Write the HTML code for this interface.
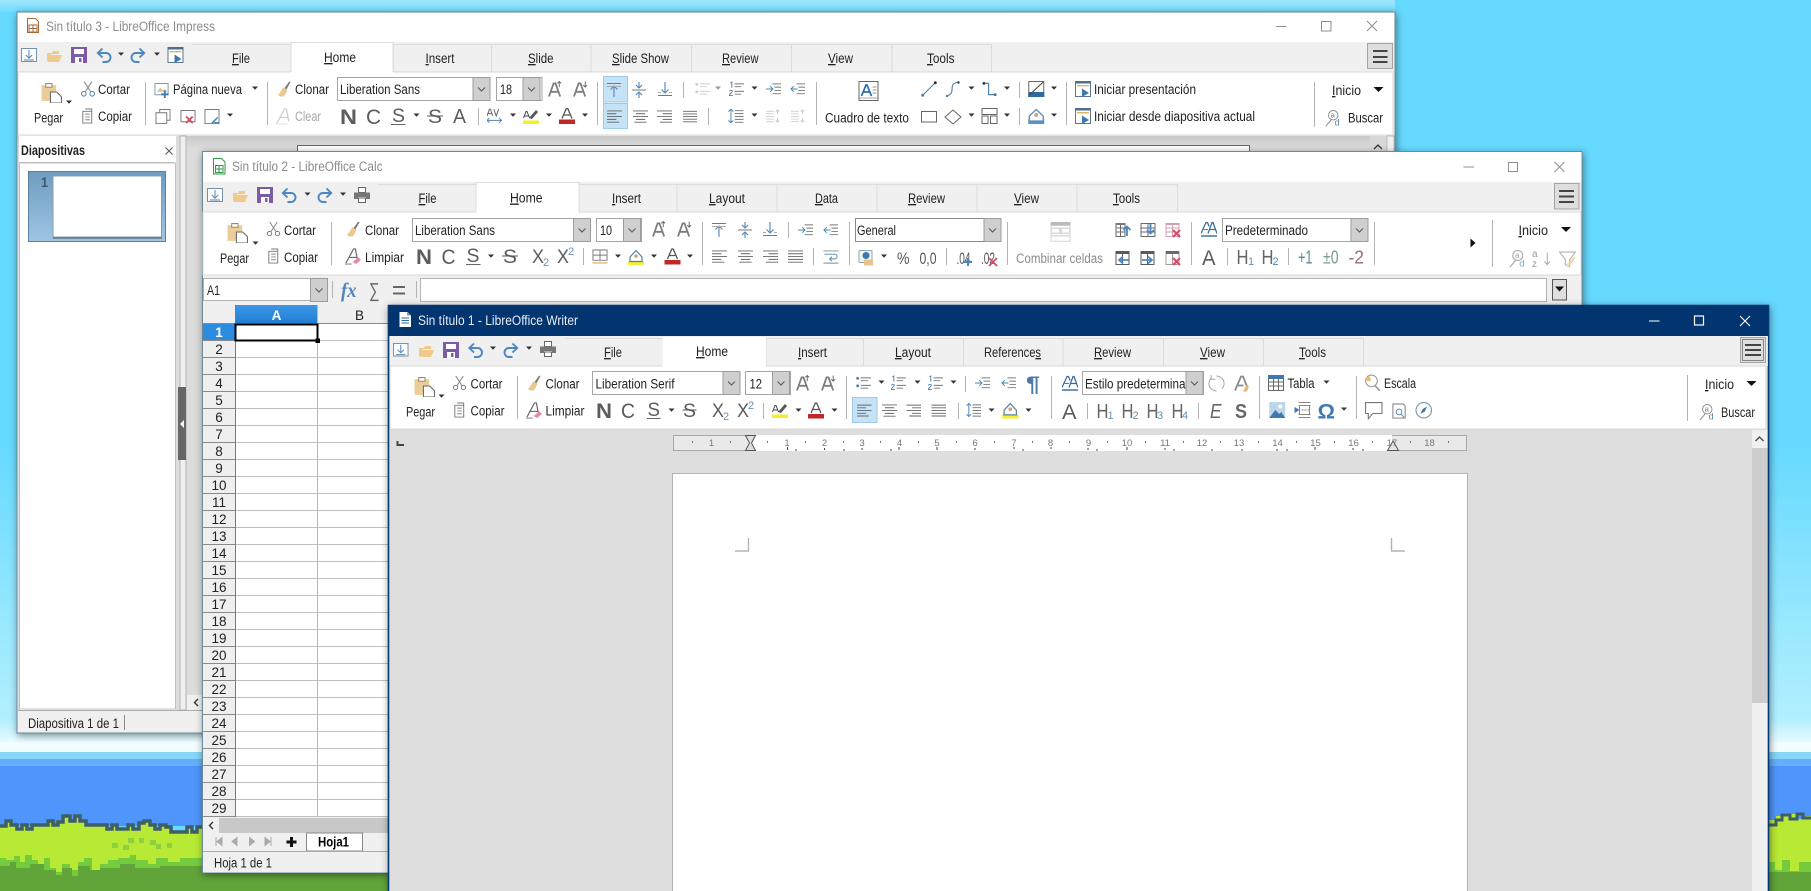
<!DOCTYPE html>
<html lang="es"><head><meta charset="utf-8"><title>LibreOffice</title>
<style>
html,body{margin:0;padding:0;width:1811px;height:891px;overflow:hidden;background:#66d9ff}
svg{display:block;position:absolute;left:0;top:0}
text{font-family:"Liberation Sans",sans-serif;font-size:13.5px;fill:#222}
.t{fill:#8c8c8c}.g{fill:#a8a8a8}.b{font-weight:bold}
.big{font-size:21px;fill:#5c5c5c}
.bold{font-weight:bold}
.h{font-size:21px;fill:#666}.s{font-size:11px;fill:#6b8fb0}
.u{text-decoration:underline}
.r{font-size:9.5px;fill:#777;text-anchor:middle}
.n{text-anchor:middle}
.sep{stroke:#b4b4b4;stroke-width:1;fill:none}
</style></head><body>
<svg width="1811" height="891" viewBox="0 0 1811 891" xmlns="http://www.w3.org/2000/svg">
<defs>
<linearGradient id="sky" x1="0" y1="0" x2="0" y2="1"><stop offset="0" stop-color="#66d9ff"/><stop offset=".6" stop-color="#66d9ff"/><stop offset=".85" stop-color="#9ae9ff"/><stop offset=".97" stop-color="#b2efff"/><stop offset="1" stop-color="#e8fbff"/></linearGradient>
<linearGradient id="top" x1="0" y1="0" x2="0" y2="1"><stop offset="0" stop-color="#9fe6fb"/><stop offset="1" stop-color="#72dcfe"/></linearGradient>
<linearGradient id="thumb" x1="0" y1="0" x2="0" y2="1"><stop offset="0" stop-color="#6e9cc0"/><stop offset="1" stop-color="#9ec5e4"/></linearGradient>
<linearGradient id="colA" x1="0" y1="0" x2="0" y2="1"><stop offset="0" stop-color="#3e97e6"/><stop offset="1" stop-color="#1f7ed2"/></linearGradient>
<linearGradient id="grayd" x1="0" y1="0" x2="0" y2="1"><stop offset="0" stop-color="#c8c8c8"/><stop offset="1" stop-color="#dcdcdc"/></linearGradient>
<filter id="sh" x="-5%" y="-5%" width="110%" height="110%"><feDropShadow dx="1" dy="2" stdDeviation="4" flood-color="#000" flood-opacity=".45"/></filter>
<path id="t" d="M-3-1.5h6l-3 3.2z" fill="#333"/>
<path id="T" d="M-5-2.5h10l-5 5z" fill="#111"/>
<g id="cb"><rect width="17" height="23" fill="#cfcfcf" stroke="#9c9c9c"/><path d="M5 10l3.5 3.5L12 10" fill="none" stroke="#555"/></g>
<symbol id="qnew" viewBox="0 0 16 16"><rect x=".5" y="1.5" width="15" height="13" fill="#fff" stroke="#7690a8"/><path d="M8 3v8M4.800 8L8 11.200 11.200 8M3 13h10" fill="none" stroke="#5585b0"/></symbol>
<symbol id="qopen" viewBox="0 0 16 16"><path d="M1 5h5l1-2h6v3H5L2 13H1zM4.500 7H16l-3 7H1.500z" fill="#efc98d"/></symbol>
<symbol id="qsave" viewBox="0 0 16 16"><path d="M0 0h16v16H0z" fill="#7c5aa8"/><path d="M3 2h10v5H3zM4 10h8v6H4z" fill="#fff"/><path d="M8 11h2.500v4H8z" fill="#7c5aa8"/></symbol>
<symbol id="qundo" viewBox="0 0 16 16"><path d="M6.500 1.500L1.800 6l4.700 4.500M2 6h8a4.500 4.500 0 0 1 0 9H6.500" fill="none" stroke="#4d87bd" stroke-width="1.900"/></symbol>
<symbol id="qredo" viewBox="0 0 16 16"><path d="M9.500 1.500L14.200 6l-4.700 4.500M14 6H6a4.500 4.500 0 0 0 0 9h3.500" fill="none" stroke="#4d87bd" stroke-width="1.900"/></symbol>
<symbol id="qprint" viewBox="0 0 16 16"><path d="M4.500.5h7v5h-7zM4.500 11h7v4.500h-7z" fill="#fff" stroke="#666"/><path d="M0 5.500h16V12h-4v-2H4v2H0z" fill="#777"/></symbol>
<symbol id="pres" viewBox="0 0 16 16"><rect x=".5" y=".5" width="15" height="15" fill="#fff" stroke="#5a7690"/><path d="M0 0h16v2.500H0z" fill="#4f6f8c"/><path d="M2 4h12v1.400H2z" fill="#e1b464"/><path d="M7 7.500L14 12 7 16z" fill="#3f78ad"/></symbol>
<symbol id="paste" viewBox="0 0 20 20"><path d="M0 3h14v15H0z" fill="#eccd98"/><path d="M4 1.500h6V5H4z" fill="#fff" stroke="#a08a64"/><path d="M8.500 9.500h6l4.500 4.500v6H8.500z" fill="#fff" stroke="#666"/></symbol>
<symbol id="sciss" viewBox="0 0 16 16"><path d="M4 .5l6.500 10M12 .5L5.500 10.500" fill="none" stroke="#888" stroke-width="1.100"/><circle cx="3.800" cy="12.800" r="2.300" fill="none" stroke="#4d7fad"/><circle cx="12.200" cy="12.800" r="2.300" fill="none" stroke="#4d7fad"/></symbol>
<symbol id="copy" viewBox="0 0 16 16"><path d="M5.500.5h7v2.500M3 3h9.500v12.500H3z" fill="#fff" stroke="#777"/><path d="M5.500 6h5M5.500 9h5M5.500 12h5" stroke="#888"/></symbol>
<symbol id="clone" viewBox="0 0 16 16"><path d="M8 7l5-7 1.300.8L10 8.500z" fill="#7a7a7a"/><path d="M1 14c2-1 3-4 6-8l4 3c-1 3-3 6-4 7H3z" fill="#eac88f"/></symbol>
<symbol id="clear" viewBox="0 0 18 18"><path d="M1 16L9 1h2l2.500 13M4.500 10h8" fill="none" stroke="#6a6a6a" stroke-width="1.300"/><path d="M8 15l6-5 3 2.500-5 4.500z" fill="#e88aa4"/><path d="M0 17h7" stroke="#777"/></symbol>
<symbol id="clearg" viewBox="0 0 18 18"><path d="M1 16L9 1h2l2.500 13M4.500 10h8" fill="none" stroke="#ccc" stroke-width="1.300"/><path d="M0 17h12" stroke="#ddd"/></symbol>
<symbol id="grow" viewBox="0 0 16 18"><path d="M1 17L6 3h2l5 14M3.500 12h7" fill="none" stroke="#7c7c7c" stroke-width="1.900"/><path d="M12 7V1M10 3l2-2 2 2" fill="none" stroke="#666"/></symbol>
<symbol id="shrink" viewBox="0 0 16 18"><path d="M1 17L6 3h2l5 14M3.500 12h7" fill="none" stroke="#7c7c7c" stroke-width="1.900"/><path d="M13 1v6M11 5l2 2 2-2" fill="none" stroke="#666"/></symbol>
<symbol id="vt" viewBox="0 0 16 16"><path d="M1 1.500h14" stroke="#777"/><path d="M8 15V4M4.500 7.500L8 4l3.500 3.500" fill="none" stroke="#4f86b8" stroke-width="1.100"/><path d="M1 4.500h14" stroke="#aaa"/></symbol>
<symbol id="vc" viewBox="0 0 16 16"><path d="M1 8h14" stroke="#777"/><path d="M8 0v5.500M5 3l3 3 3-3M8 16v-5.500M5 13l3-3 3 3" fill="none" stroke="#4f86b8" stroke-width="1.100"/></symbol>
<symbol id="vb" viewBox="0 0 16 16"><path d="M1 14.500h14" stroke="#777"/><path d="M8 1v11M4.500 8.500L8 12l3.500-3.500" fill="none" stroke="#4f86b8" stroke-width="1.100"/><path d="M1 11.500h3M12 11.500h3" stroke="#aaa"/></symbol>
<symbol id="al" viewBox="0 0 16 16"><path d="M0 1.500h16M0 4.500h10M0 7.500h16M0 10.500h10M0 13.500h13" stroke="#666"/></symbol>
<symbol id="ac" viewBox="0 0 16 16"><path d="M0 1.500h16M3 4.500h10M0 7.500h16M3 10.500h10M1.500 13.500h13" stroke="#666"/></symbol>
<symbol id="ar" viewBox="0 0 16 16"><path d="M0 1.500h16M6 4.500h10M0 7.500h16M6 10.500h10M3 13.500h13" stroke="#666"/></symbol>
<symbol id="aj" viewBox="0 0 16 16"><path d="M0 1.500h16M0 4.500h16M0 7.500h16M0 10.500h16M0 13.500h16" stroke="#666"/></symbol>
<symbol id="ind" viewBox="0 0 16 16"><path d="M7 2.500h9M9 6h7M9 9.500h7M7 13h9" stroke="#777"/><path d="M0 8h7M4.500 5L7.500 8 4.500 11" fill="none" stroke="#3f8ab0"/></symbol>
<symbol id="out" viewBox="0 0 16 16"><path d="M7 2.500h9M9 6h7M9 9.500h7M7 13h9" stroke="#777"/><path d="M8 8H1M4 5L1 8l3 3" fill="none" stroke="#3f8ab0"/></symbol>
<symbol id="bul" viewBox="0 0 16 16"><path d="M5 2.500h11M5 5.500h8M5 10.500h11M5 13.500h8" stroke="#777"/><circle cx="1.800" cy="3" r="1.500" fill="#4f7fa8"/><circle cx="1.800" cy="11" r="1.500" fill="#4f7fa8"/></symbol>
<symbol id="num" viewBox="0 0 16 16"><path d="M6 2.500h10M6 5.500h7M6 10.500h10M6 13.500h7" stroke="#777"/><path d="M1.500 1.500L3 .5v6M.5 10.500c.5-1.500 3-1.500 3 0 0 1.500-3 2-3 4.500h3.500" fill="none" stroke="#4f7fa8"/></symbol>
<symbol id="lsp" viewBox="0 0 16 16"><path d="M7 2.500h9M7 5.500h9M7 8.500h9M7 11.500h9M7 14.500h9" stroke="#777"/><path d="M3 1v14M.5 3.500L3 1l2.500 2.500M.5 12.500L3 15l2.500-2.500" fill="none" stroke="#4f86b8"/></symbol>
<symbol id="ls2" viewBox="0 0 16 16"><path d="M0 2.500h9M0 5.500h9M0 8.500h9M0 11.500h9M0 14.500h9" stroke="#ccc"/><path d="M13 1v5M11 3l2-2 2 2M13 15v-5M11 13l2 2 2-2" fill="none" stroke="#c4c4c4"/></symbol>
<symbol id="hl" viewBox="0 0 16 16"><path d="M0 12.500h16V16H0z" fill="#f5ee2b"/><path d="M6 10l7-8 2 2-6 7z" fill="#555"/><path d="M.5 10L3 3.500h1L6.500 10M1.500 8h4" fill="none" stroke="#444"/></symbol>
<symbol id="fc" viewBox="0 0 16 16"><path d="M0 11.500h16V16H0z" fill="#c02828"/><path d="M3 10.500L7.300.5h1.400L13 10.500M5 7h6" fill="none" stroke="#555" stroke-width="1.300"/></symbol>
<symbol id="bgc" viewBox="0 0 16 16"><path d="M0 12h16v4H0z" fill="#f4ee35"/><path d="M2 8l6-6.500 6 6.500v4.500H2z" fill="#fff" stroke="#5a7f9f" stroke-width="1.200"/><circle cx="8" cy="7" r="1.800" fill="#c8a878"/></symbol>
<symbol id="bord" viewBox="0 0 16 16"><path d="M.5.500h15v11H.5zM8 .5v11M.5 6h15" fill="none" stroke="#7a7a7a"/><path d="M0 13.500h16V15H0z" fill="#e2b574"/></symbol>
<symbol id="avs" viewBox="0 0 16 16"><path d="M0 8L2.500 1h1L6 8M1 5.500h4M7 1l2.500 7L12 1" fill="none" stroke="#666"/><path d="M0 12.500h15M2.500 10L0 12.500 2.500 15M12.500 10l2.500 2.500-2.500 2.500" fill="none" stroke="#4f86b8"/></symbol>
<symbol id="tb" viewBox="0 0 20 20"><rect x=".5" y=".5" width="19" height="19" fill="#fff" stroke="#666"/><path d="M1 17h18" stroke="#aaa"/><path d="M3 15L7.500 4h1L13 15M5 11h6" fill="none" stroke="#2c6ea8" stroke-width="1.700"/><path d="M14 6h4M14 9h4M14 12h4" stroke="#999"/></symbol>
<symbol id="line" viewBox="0 0 16 16"><path d="M1.500 14.500l13-13" stroke="#5082ae" stroke-width="1.100"/><circle cx="1.700" cy="14.300" r="1.500" fill="#4f7fa8"/><circle cx="14.300" cy="1.700" r="1.500" fill="#333"/></symbol>
<symbol id="curve" viewBox="0 0 16 16"><path d="M2 15C12 12 2 2 13 1.500" fill="none" stroke="#5082ae" stroke-width="1.100"/><circle cx="2" cy="15" r="1.200" fill="#4f7fa8"/><circle cx="13.500" cy="1.500" r="1.200" fill="#333"/></symbol>
<symbol id="conn" viewBox="0 0 16 16"><path d="M2 2h5v12h7" fill="none" stroke="#5082ae" stroke-width="1.300"/><circle cx="2" cy="2" r="1.500" fill="#333"/><circle cx="14" cy="14" r="1.500" fill="#3b6f9e"/></symbol>
<symbol id="fill1" viewBox="0 0 16 16"><rect x=".5" y=".5" width="15" height="15" fill="#fff" stroke="#666"/><path d="M0 11h16v5H0z" fill="#2d6aa0"/><path d="M1 14L15 1" stroke="#444"/></symbol>
<symbol id="fill2" viewBox="0 0 16 16"><path d="M0 11h16v5H0z" fill="#5b93c6"/><path d="M1 8l7-6.500 7 6.500v5H1z" fill="#fff" stroke="#5a8cb8" stroke-width="1.300"/><circle cx="8" cy="7" r="2" fill="#c8a878"/></symbol>
<symbol id="lay" viewBox="0 0 16 16"><path d="M.5.500h15v6H.5zM.5 8h6v7.500h-6zM9 8h6.500v7.500H9z" fill="#fff" stroke="#666"/></symbol>
<symbol id="pg" viewBox="0 0 16 16"><path d="M4.500.5H15.500V12H4.500z" fill="#fff" stroke="#777"/><path d="M.5 4H12V15.500H.5z" fill="#fff" stroke="#777"/></symbol>
<symbol id="pgdel" viewBox="0 0 16 16"><path d="M.5.500h15v12H.5z" fill="#fff" stroke="#777"/><path d="M6 7l7 7M13 7l-7 7" stroke="#d0506c" stroke-width="2"/></symbol>
<symbol id="pgfmt" viewBox="0 0 16 16"><path d="M.5.500h15v15H.5z" fill="#fff" stroke="#777"/><path d="M8 15l6-6" stroke="#3c78ad" stroke-width="1.500"/><path d="M10 15h6v-1h-6z" fill="#3c78ad"/></symbol>
<symbol id="newp" viewBox="0 0 16 16"><path d="M.5.500h14v12H.5z" fill="#fff" stroke="#7d98b0"/><path d="M2 10L6 5l3 3 2-1.500 3 3H2z" fill="#e5c487"/><path d="M11 8v8M7 12h8" stroke="#3e7cb0" stroke-width="2"/></symbol>
<symbol id="srch" viewBox="0 0 16 18"><circle cx="8.800" cy="5.500" r="5" fill="none" stroke="#8a8a8a"/><path d="M7 10L1 17" stroke="#8a8a8a"/><text x="6" y="8.200" style="font-size:8px;fill:#7a7a7a">a</text><text x="10.200" y="16.500" style="font-size:9.500px;fill:#4f86b8">d</text></symbol>
<symbol id="mi" viewBox="0 0 16 16"><path d="M.5.500h15v15H.5z" fill="#fff" stroke="#ddd"/><path d="M0 0h16v3H0z" fill="#bbb"/><path d="M.5 5h7v4h-7zM8.500 5h7v4h-7zM.5 11h15" fill="none" stroke="#d4d4d4"/></symbol>
<symbol id="cu" viewBox="0 0 16 16"><path d="M1 1.500h9v13H1zM1 6h9M1 10h9M5.500 1.500v13" fill="none" stroke="#6a6a6a"/><path d="M1 1h9v2H1z" fill="#7a7a7a"/><path d="M12 14V5M8.500 8l3.500-3.500L15.500 8" fill="none" stroke="#4c86bd" stroke-width="1.800"/></symbol>
<symbol id="cd" viewBox="0 0 16 16"><path d="M1 1.500h14v13H1zM1 6h14M1 10h14M8 1.500v13" fill="none" stroke="#6a6a6a"/><path d="M10.500 2v9M7 8l3.500 3.500L14 8" fill="none" stroke="#4c86bd" stroke-width="1.800"/></symbol>
<symbol id="cx" viewBox="0 0 16 16"><path d="M1 1.500h13v13H1zM1 6h13M1 10h13M7.500 1.500v13" fill="none" stroke="#d49fae"/><path d="M1 1h13v2H1z" fill="#d49fae"/><path d="M8 8l7 7M15 8l-7 7" stroke="#d0506c" stroke-width="2"/></symbol>
<symbol id="cl" viewBox="0 0 16 16"><path d="M1 1.500h13v13H1zM7.500 1.500v13" fill="none" stroke="#5a5a5a"/><path d="M1 1h13v3H1z" fill="#5a5a5a"/><path d="M14 10H4M8 6.500L4 10l4 3.500" fill="none" stroke="#4c86bd" stroke-width="1.800"/></symbol>
<symbol id="cr" viewBox="0 0 16 16"><path d="M1 1.500h13v13H1zM7.500 1.500v13" fill="none" stroke="#5a5a5a"/><path d="M1 1h13v3H1z" fill="#5a5a5a"/><path d="M2 10h10M8 6.500l4 3.500-4 3.500" fill="none" stroke="#4c86bd" stroke-width="1.800"/></symbol>
<symbol id="cxd" viewBox="0 0 16 16"><path d="M1 1.500h13v13H1zM7.500 1.500v13" fill="none" stroke="#a99"/><path d="M1 1h13v3H1z" fill="#6a6a6a"/><path d="M8 8l7 7M15 8l-7 7" stroke="#d0506c" stroke-width="2"/></symbol>
<symbol id="wrap" viewBox="0 0 16 16"><path d="M0 1.500h16M0 14.500h16" stroke="#888"/><path d="M1 5h11a2 2 0 0 1 0 5H7M9 7.500L6.500 10 9 12.500" fill="none" stroke="#4f86b8"/></symbol>
<symbol id="cur" viewBox="0 0 16 16"><rect x="1" y="1" width="13" height="12" rx="1" fill="#f4f4f4" stroke="#8aa"/><circle cx="8" cy="6" r="3.500" fill="#3d78ae"/><path d="M6 10h9v6H6z" fill="#e8c38b"/></symbol>
<symbol id="flt" viewBox="0 0 16 16"><path d="M.5 1h15L10 8v7l-4-2V8z" fill="#fff" stroke="#999"/><path d="M6 14L14 5l1.500 1.500L9 15z" fill="#e8c98d"/></symbol>
<symbol id="sort" viewBox="0 0 16 16"><path d="M12 1v13M9 10.500l3 3.500 3-3.500" fill="none" stroke="#888"/></symbol>
<symbol id="tabl" viewBox="0 0 16 16"><path d="M.5.500h15v15H.5zM.5 7h15M.5 11h15M5.500 3v12.500M10.500 3v12.500" fill="#fff" stroke="#666"/><path d="M0 0h16v4H0z" fill="#3f78ad"/></symbol>
<symbol id="esc" viewBox="0 0 16 16"><circle cx="7" cy="6.500" r="5.500" fill="#fff" stroke="#999"/><path d="M7 6.500L5 1.500a5.500 5.500 0 0 0-3.500 5z" fill="#e5bd7c"/><path d="M10.500 11L15 16" stroke="#999" stroke-width="1.500"/></symbol>
<symbol id="upd" viewBox="0 0 16 16"><path d="M3 3A7 7 0 0 0 8 15M13 13A7 7 0 0 0 8 1" fill="none" stroke="#9ab"/><path d="M3 0v4h4" fill="none" stroke="#9ab"/></symbol>
<symbol id="Asty" viewBox="0 0 16 16"><path d="M1 15L7 1h2l4 10M3.500 10h6" fill="none" stroke="#8a8a8a" stroke-width="1.800"/><path d="M9 16l3-6 3 1-2 5z" fill="#e0b877"/></symbol>
<symbol id="AA" viewBox="0 0 16 16"><path d="M0 12L5 1h1.500L8 5M7 12L11 1h1l4 11M9 8h5" fill="none" stroke="#33699c" stroke-width="1.200"/><path d="M2 8h5" stroke="#777"/><path d="M0 14.500h16" stroke="#33699c" stroke-width="1.400"/></symbol>
<symbol id="img" viewBox="0 0 16 16"><path d="M0 0h16v16H0z" fill="#bcd6ea"/><path d="M0 16l6-8 4 4 2-2 4 6z" fill="#3f78ad"/><circle cx="11" cy="4.500" r="2" fill="#fff"/></symbol>
<symbol id="brk" viewBox="0 0 16 16"><path d="M4 .5h12M4 3.500h12M4 12.500h12M4 15.500h12M5 4v8M15 4v8" stroke="#888"/><path d="M0 5l5 3-5 3z" fill="#3f78ad"/><path d="M7 8h8" stroke="#888" stroke-dasharray="2 1"/></symbol>
<symbol id="cmt" viewBox="0 0 16 16"><path d="M.5.500h15v10H7l-4 5v-5H.5z" fill="#fff" stroke="#777"/></symbol>
<symbol id="prv" viewBox="0 0 16 16"><path d="M1 .5h11l2 2v13H1z" fill="#fff" stroke="#777"/><circle cx="7.500" cy="9" r="3" fill="none" stroke="#4f86b8"/><path d="M10 11.500l3 3.500" stroke="#4f86b8"/></symbol>
<symbol id="nav" viewBox="0 0 16 16"><circle cx="8" cy="8" r="7.500" fill="#fff" stroke="#7f9db8" stroke-width="1.200"/><path d="M4.800 11.500L7 6.800 11.200 4.500 9 9.300z" fill="#3f78ad"/></symbol>
<symbol id="doc" viewBox="0 0 12 15"><path d="M.5.500h8l3 3v11H.5z" fill="#fff" stroke="#a5693a"/></symbol>
</defs>

<!-- desktop -->
<rect width="1811" height="742" fill="url(#sky)"/>
<rect x="0" y="0" width="1395" height="12" fill="url(#top)"/>
<rect y="742" width="1811" height="10" fill="#f2fdff"/>
<rect y="752" width="1811" height="7" fill="#85d6f8"/>
<rect y="759" width="1811" height="8" fill="#66aefc"/>
<rect y="766" width="1811" height="60" fill="#4f95fb"/>
<path d="M0 826H6V821H11V825H17V829H22V825H27V829H32V825H48V821H53V825H58V822H63V816H70V821H75V816H80V821H86V825H107V829H112V825H117V829H128V825H133V829H139V823H144V821H150V825H155V829H160V825H166V827H171V832H187V827H192V832H197V827H203V891H0Z" fill="#b8e934"/>
<path d="M0 826H6V821H11V825H17V829H22V825H27V829H32V825H48V821H53V825H58V822H63V816H70V821H75V816H80V821H86V825H107V829H112V825H117V829H128V825H133V829H139V823H144V821H150V825H155V829H160V825H166V827H171V832H187V827H192V832H197V827H203" fill="none" stroke="#3f5f66" stroke-width="3.500"/>
<path d="M0 858H6V860H14V856H20V862H25V855H32V860H38V864H44V858H50V868H56V872H62V864H70V870H78V862H84V858H92V870H100V864H108V860H118V858H130V855H136V860H148V864H156V858H168V862H180V858H203V891H0Z" fill="#74cc3c"/>
<path d="M0 866H10V862H16V868H30V864H44V870H56V875H62V868H72V876H78V866H90V870H100V868H120V864H135V868H160V866H203V891H0Z" fill="#60a43a"/>
<rect x="203" y="873" width="186" height="18" fill="#60a43a"/>
<path d="M1769 825V820H1776V816H1790V814H1797V819H1806V816H1811V891H1769Z" fill="#b8e934"/>
<path d="M1769 825H1776V820H1782V815H1790V819H1797V814H1803V818H1811" fill="none" stroke="#3f5f66" stroke-width="3"/>
<path d="M1769 862H1775V870H1782V860H1790V871H1799V862H1811V891H1769Z" fill="#74cc3c"/>
<rect x="1769" y="872" width="42" height="19" fill="#60a43a"/>
<path d="M112 843h6v5h-6zM123 845h6v5h-6zM128 838h6v5h-6zM139 838h5v5h-5zM150 840h6v5h-6zM156 844h5v5h-5zM167 843h5v5h-5z" fill="#8ed13c"/>

<!-- IMPRESS -->
<g>
<rect x="17" y="12" width="1378" height="721" fill="#f0f0f0" stroke="#6c8b9a" filter="url(#sh)"/>
<rect x="18" y="13" width="1376" height="29" fill="#fff"/>
<rect x="18" y="42" width="1376" height="30" fill="#f0f0f0"/>
<use href="#doc" x="27" y="18" width="12" height="15"/><path d="M29 25h8v7h-8zM33 25v7M29 28.500h8" fill="none" stroke="#a5693a"/>
<text x="46" y="31" class="t" textLength="169" lengthAdjust="spacingAndGlyphs">Sin título 3 - LibreOffice Impress</text>
<path d="M1276 26.500h10.500" stroke="#8f8f8f"/><rect x="1321.500" y="21.500" width="9.500" height="9.500" fill="none" stroke="#8f8f8f"/><path d="M1367 21l10 10M1377 21l-10 10" stroke="#8f8f8f"/>
<use href="#qnew" x="21" y="47" width="16" height="16"/><use href="#qopen" x="46" y="48" width="16" height="16"/><use href="#qsave" x="71" y="47" width="16" height="16"/><use href="#qundo" x="96" y="47" width="16" height="16"/><use href="#t" x="121" y="54"/><use href="#qredo" x="130" y="47" width="16" height="16"/><use href="#t" x="157" y="54"/><use href="#pres" x="167.500" y="47" width="16" height="16"/>
<path d="M192 44.500H991.500V72" fill="none" stroke="#dcdcdc"/>
<path d="M393.500 44v28M491.500 44v28M591 44v28M691.500 44v28M791.500 44v28M892 44v28" stroke="#dcdcdc"/>
<rect x="18" y="72" width="1375" height="63" fill="#fff" stroke="#d8d8d8"/>
<rect x="291" y="42.500" width="102" height="31" fill="#fff"/><path d="M291 72V42.500h102V72" fill="none" stroke="#dcdcdc"/>
<text x="232" y="63" textLength="18" lengthAdjust="spacingAndGlyphs"><tspan class="u">F</tspan>ile</text>
<text x="324" y="62" textLength="32" lengthAdjust="spacingAndGlyphs"><tspan class="u">H</tspan>ome</text>
<text x="425.500" y="63" textLength="29" lengthAdjust="spacingAndGlyphs"><tspan class="u">I</tspan>nsert</text>
<text x="528" y="63" textLength="25.500" lengthAdjust="spacingAndGlyphs"><tspan class="u">S</tspan>lide</text>
<text x="612" y="63" textLength="57" lengthAdjust="spacingAndGlyphs"><tspan class="u">S</tspan>lide Show</text>
<text x="722" y="63" textLength="36.500" lengthAdjust="spacingAndGlyphs"><tspan class="u">R</tspan>eview</text>
<text x="828" y="63" textLength="25" lengthAdjust="spacingAndGlyphs"><tspan class="u">V</tspan>iew</text>
<text x="927" y="63" textLength="27.500" lengthAdjust="spacingAndGlyphs"><tspan class="u">T</tspan>ools</text>
<rect x="1367.500" y="43.500" width="25" height="25" fill="#dedede" stroke="#a4a4a4"/><path d="M1373 51h14.500M1373 57h14.500M1373 62h14.500" stroke="#444" stroke-width="2"/>
<use href="#paste" x="41" y="82" width="22" height="21"/><use href="#t" x="69" y="102"/><text x="34" y="122.500" textLength="29" lengthAdjust="spacingAndGlyphs">Pegar</text>
<use href="#sciss" x="80" y="81" width="16" height="16"/><text x="98" y="94" textLength="32" lengthAdjust="spacingAndGlyphs">Cortar</text>
<use href="#copy" x="80" y="108" width="15" height="16"/><text x="98" y="121" textLength="34" lengthAdjust="spacingAndGlyphs">Copiar</text>
<path class="sep" d="M145.500 82v43M267.500 82v43M478.500 108v17M597.500 82v43M683.500 82v16M708.500 108v17M816.500 82v43M1019.500 82v16M1019.500 108v17M1066.500 82v43M1314.500 82v45"/>
<use href="#newp" x="154" y="83" width="16" height="15"/><text x="173" y="94" textLength="69" lengthAdjust="spacingAndGlyphs">Página nueva</text><use href="#t" x="255" y="88"/>
<use href="#pg" x="155" y="109" width="16" height="15"/><use href="#pgdel" x="180" y="110" width="16" height="15"/><use href="#pgfmt" x="204" y="109" width="16" height="15"/><use href="#t" x="230" y="115"/>
<use href="#clone" x="277" y="81" width="15" height="16"/><text x="295" y="94" textLength="34" lengthAdjust="spacingAndGlyphs">Clonar</text>
<use href="#clearg" x="276" y="108" width="17" height="17"/><text x="295" y="121" class="g" textLength="26" lengthAdjust="spacingAndGlyphs">Clear</text>
<rect x="337.500" y="77.500" width="152.500" height="23" fill="#fff" stroke="#a6a6a6"/><use href="#cb" x="473" y="77.500"/><text x="340" y="94" textLength="80" lengthAdjust="spacingAndGlyphs">Liberation Sans</text>
<rect x="496.500" y="77.500" width="45.500" height="23" fill="#fff" stroke="#a6a6a6"/><use href="#cb" x="523" y="77.500"/><text x="500" y="94" textLength="12" lengthAdjust="spacingAndGlyphs">18</text>
<use href="#grow" x="548" y="80" width="15" height="18"/><use href="#shrink" x="573" y="80" width="15" height="18"/>
<rect x="603.500" y="76.500" width="24" height="25.500" fill="#c6e2f6" stroke="#a0cbe8"/><rect x="603.500" y="103.500" width="24" height="25" fill="#c6e2f6" stroke="#a0cbe8"/>
<use href="#vt" x="606" y="82" width="16" height="16"/><use href="#vc" x="631" y="82" width="16" height="16"/><use href="#vb" x="657" y="81" width="16" height="16"/>
<text x="340" y="124" class="big bold" textLength="17" lengthAdjust="spacingAndGlyphs">N</text><text x="366" y="124" class="big" textLength="15" lengthAdjust="spacingAndGlyphs">C</text><text x="392" y="122" class="big" style="font-size:19px" textLength="13" lengthAdjust="spacingAndGlyphs">S</text><path d="M391 124.500h14.500" stroke="#666"/><use href="#t" x="416.500" y="115"/>
<text x="428" y="123" class="big" style="font-size:19px" textLength="14" lengthAdjust="spacingAndGlyphs">S</text><path d="M427 116h16" stroke="#555"/><text x="453" y="123" class="big" style="font-size:20px" textLength="13" lengthAdjust="spacingAndGlyphs">A</text>
<use href="#avs" x="487" y="108" width="15.500" height="16"/><use href="#t" x="513" y="115"/><use href="#hl" x="523" y="108" width="16" height="16"/><use href="#t" x="549" y="115"/><use href="#fc" x="559" y="108" width="16" height="16"/><use href="#t" x="585" y="115"/>
<use href="#al" x="607" y="109" width="15" height="16"/><use href="#ac" x="633" y="109" width="15" height="16"/><use href="#ar" x="657" y="109" width="15" height="16"/><use href="#aj" x="683" y="109" width="14" height="16"/>
<g opacity=".35"><use href="#bul" x="695" y="81" width="15" height="16"/></g><use href="#t" x="718" y="88" opacity=".5"/><use href="#num" x="729" y="81" width="15" height="16"/><use href="#t" x="754.500" y="88"/><use href="#ind" x="766" y="81" width="15" height="16"/><use href="#out" x="790" y="81" width="15" height="16"/>
<use href="#lsp" x="728" y="108" width="15.500" height="16"/><use href="#t" x="754.500" y="115"/><use href="#ls2" x="766" y="108" width="14" height="16"/><use href="#ls2" x="791" y="108" width="14" height="16"/>
<use href="#tb" x="858" y="81" width="21" height="20"/><text x="825" y="122.500" textLength="84" lengthAdjust="spacingAndGlyphs">Cuadro de texto</text>
<use href="#line" x="921" y="81" width="16" height="16"/><use href="#curve" x="945" y="81" width="16" height="16"/><use href="#t" x="971.500" y="88"/><use href="#conn" x="982" y="81" width="15" height="16"/><use href="#t" x="1007" y="88"/><use href="#fill1" x="1028" y="81" width="16.500" height="16"/><use href="#t" x="1054" y="88"/>
<rect x="921.500" y="111.500" width="15" height="10.500" fill="#fff" stroke="#666"/><path d="M953 110l8 7-8 7-8-7z" fill="#fff" stroke="#666"/><use href="#t" x="971.500" y="115"/><use href="#lay" x="981.500" y="108" width="16" height="16"/><use href="#t" x="1007" y="115"/><use href="#fill2" x="1028" y="108" width="16.500" height="16"/><use href="#t" x="1054" y="115"/>
<use href="#pres" x="1075" y="81" width="16" height="16"/><text x="1094" y="94" textLength="102" lengthAdjust="spacingAndGlyphs">Iniciar presentación</text>
<use href="#pres" x="1075" y="108" width="16" height="16"/><text x="1094" y="121" textLength="161" lengthAdjust="spacingAndGlyphs">Iniciar desde diapositiva actual</text>
<text x="1332" y="95" textLength="29" lengthAdjust="spacingAndGlyphs"><tspan class="u">I</tspan>nicio</text><use href="#T" x="1378.500" y="89.500"/>
<use href="#srch" x="1324" y="110" width="17" height="17"/><text x="1348" y="122.500" textLength="35" lengthAdjust="spacingAndGlyphs">Buscar</text>
<rect x="18" y="136" width="1376" height="574" fill="#dcdcdc"/>
<rect x="18" y="136" width="1376" height="12" fill="url(#grayd)"/>
<rect x="297.500" y="145.500" width="952" height="20" fill="#fff" stroke="#666"/>
<rect x="1370" y="136" width="17" height="30" fill="#d8d8d8"/><rect x="1387" y="136" width="7" height="30" fill="#f0f0f0" stroke="#bbb"/>
<path d="M1374 149l4-4 4 4" fill="none" stroke="#333" stroke-width="1.300"/>
<rect x="19" y="136" width="161" height="574" fill="#fff"/>
<rect x="176" y="136" width="5" height="574" fill="#ddd"/>
<rect x="180" y="136" width="6" height="574" fill="#f0f0f0" stroke="#b4b4b4"/>
<rect x="178" y="387" width="8" height="73" fill="#666"/><path d="M184 420v8l-4-4z" fill="#fff"/>
<text x="21" y="155" class="b" textLength="64" lengthAdjust="spacingAndGlyphs">Diapositivas</text>
<path d="M165.500 147.500l7 7M172.500 147.500l-7 7" stroke="#555"/>
<path d="M19.500 162.500h154.500" stroke="#bdbdbd"/>
<rect x="19.500" y="163" width="156" height="546" fill="#fff" stroke="#c0c0c0"/>
<rect x="28.500" y="171.500" width="137" height="70" fill="url(#thumb)" stroke="#5a7f9f"/>
<rect x="53" y="176" width="108.500" height="61" fill="#fff" stroke="#8a9cac"/><path d="M53 238h109" stroke="#5f7a92" stroke-width="1.500"/>
<text x="41" y="187" style="fill:#40566b;font-weight:bold" textLength="7" lengthAdjust="spacingAndGlyphs">1</text>
<rect x="187" y="695" width="15" height="15" fill="#f0f0f0"/><path d="M198 699l-3.500 3.500 3.500 3.500" fill="none" stroke="#333" stroke-width="1.400"/>
<rect x="18" y="711" width="1376" height="21" fill="#f0f0f0"/><path d="M18 710.500h1376" stroke="#aaa"/>
<text x="28" y="728" textLength="91" lengthAdjust="spacingAndGlyphs">Diapositiva 1 de 1</text><path d="M124.500 715v15" stroke="#888"/>
</g>

<!-- CALC -->
<g>
<rect x="202.500" y="151.500" width="1379.500" height="721" fill="#f0f0f0" stroke="#6c8b9a" filter="url(#sh)"/>
<rect x="203" y="152" width="1378.500" height="30" fill="#fff"/>
<rect x="203" y="182" width="1378.500" height="30" fill="#f0f0f0"/>
<path d="M213.500 158.500h8l3.500 3.500v12h-11.500z" fill="#fff" stroke="#2f9a45"/><rect x="215.500" y="165.500" width="7.500" height="7" fill="#fff" stroke="#2f9a45"/><path d="M219 165.500v7M215.500 169h7.500" stroke="#2f9a45"/>
<text x="232" y="171" class="t" textLength="150.500" lengthAdjust="spacingAndGlyphs">Sin título 2 - LibreOffice Calc</text>
<path d="M1463.500 167h10.500" stroke="#8f8f8f"/><rect x="1508.500" y="162.500" width="9" height="9" fill="none" stroke="#8f8f8f"/><path d="M1554.500 162l10 10M1564.500 162l-10 10" stroke="#8f8f8f"/>
<use href="#qnew" x="207" y="187" width="16" height="16"/><use href="#qopen" x="232" y="188" width="16" height="16"/><use href="#qsave" x="257" y="187" width="16" height="16"/><use href="#qundo" x="281" y="187" width="16" height="16"/><use href="#t" x="307.500" y="194"/><use href="#qredo" x="317" y="187" width="16" height="16"/><use href="#t" x="343" y="194"/><use href="#qprint" x="354" y="187" width="16" height="16"/>
<path d="M377.500 184.500H1177.500V212" fill="none" stroke="#dcdcdc"/>
<path d="M579 184v28M677 184v28M777 184v28M877 184v28M977 184v28M1077 184v28" stroke="#dcdcdc"/>
<rect x="203" y="212" width="1378" height="63" fill="#fff" stroke="#d8d8d8"/>
<rect x="476" y="182.500" width="103" height="31" fill="#fff"/><path d="M476 212V182.500h103V212" fill="none" stroke="#dcdcdc"/>
<text x="418.500" y="203" textLength="18" lengthAdjust="spacingAndGlyphs"><tspan class="u">F</tspan>ile</text>
<text x="510" y="202.500" textLength="32.500" lengthAdjust="spacingAndGlyphs"><tspan class="u">H</tspan>ome</text>
<text x="612" y="203" textLength="29" lengthAdjust="spacingAndGlyphs"><tspan class="u">I</tspan>nsert</text>
<text x="709" y="203" textLength="36" lengthAdjust="spacingAndGlyphs"><tspan class="u">L</tspan>ayout</text>
<text x="815" y="203" textLength="23" lengthAdjust="spacingAndGlyphs"><tspan class="u">D</tspan>ata</text>
<text x="908" y="203" textLength="37" lengthAdjust="spacingAndGlyphs"><tspan class="u">R</tspan>eview</text>
<text x="1014" y="203" textLength="25" lengthAdjust="spacingAndGlyphs"><tspan class="u">V</tspan>iew</text>
<text x="1113" y="203" textLength="27" lengthAdjust="spacingAndGlyphs"><tspan class="u">T</tspan>ools</text>
<rect x="1554.500" y="183.500" width="24.500" height="25.500" fill="#dedede" stroke="#a4a4a4"/><path d="M1559 191h15M1559 196.500h15M1559 202h15" stroke="#444" stroke-width="2"/>
<use href="#paste" x="227" y="222" width="22" height="21"/><use href="#t" x="255.500" y="243"/><text x="220" y="263" textLength="29" lengthAdjust="spacingAndGlyphs">Pegar</text>
<use href="#sciss" x="266" y="221" width="15" height="16"/><text x="284" y="235" textLength="32" lengthAdjust="spacingAndGlyphs">Cortar</text>
<use href="#copy" x="266" y="248" width="15" height="16"/><text x="284" y="262" textLength="34" lengthAdjust="spacingAndGlyphs">Copiar</text>
<path class="sep" d="M331.500 222v43M583.500 248v17M702.500 222v43M788.500 222v16M813.500 248v17M849.500 222v43M946.500 248v17M1007.500 222v43M1191.500 222v43M1227.500 248v17M1288.500 248v17M1374.500 222v43M1492.500 220v47"/>
<use href="#clone" x="346" y="221" width="15" height="16"/><text x="365" y="235" textLength="34" lengthAdjust="spacingAndGlyphs">Clonar</text>
<use href="#clear" x="345" y="248" width="17" height="17"/><text x="365" y="262" textLength="39" lengthAdjust="spacingAndGlyphs">Limpiar</text>
<rect x="412.500" y="218.500" width="178" height="23" fill="#fff" stroke="#a6a6a6"/><use href="#cb" x="573.500" y="218.500"/><text x="415" y="235" textLength="80" lengthAdjust="spacingAndGlyphs">Liberation Sans</text>
<rect x="596.500" y="218.500" width="45" height="23" fill="#fff" stroke="#a6a6a6"/><use href="#cb" x="623.500" y="218.500"/><text x="600" y="235" textLength="12" lengthAdjust="spacingAndGlyphs">10</text>
<use href="#grow" x="652" y="220" width="15" height="18"/><use href="#shrink" x="677" y="220" width="15" height="18"/>
<use href="#vt" x="711" y="222" width="16" height="16"/><use href="#vc" x="737" y="222" width="16" height="16"/><use href="#vb" x="762" y="221" width="16" height="16"/>
<use href="#ind" x="798" y="222" width="15" height="16"/><use href="#out" x="823" y="222" width="15" height="16"/>
<text x="416" y="264" class="big bold" textLength="16" lengthAdjust="spacingAndGlyphs">N</text><text x="441.500" y="264" class="big" textLength="14" lengthAdjust="spacingAndGlyphs">C</text><text x="466.500" y="262" class="big" style="font-size:19px" textLength="13" lengthAdjust="spacingAndGlyphs">S</text><path d="M466 264.500h14.500" stroke="#666"/><use href="#t" x="491" y="256"/>
<text x="503" y="263" class="big" style="font-size:19px" textLength="14" lengthAdjust="spacingAndGlyphs">S</text><path d="M502 256h16" stroke="#555"/>
<text x="532" y="263" class="big" style="font-size:19px" textLength="12" lengthAdjust="spacingAndGlyphs">X</text><text x="543" y="266" class="s" style="font-size:11px">2</text>
<text x="557" y="263" class="big" style="font-size:19px" textLength="12" lengthAdjust="spacingAndGlyphs">X</text><text x="568" y="255" class="s" style="font-size:11px">2</text>
<use href="#bord" x="592.500" y="249" width="15" height="16"/><use href="#t" x="618" y="256"/><use href="#bgc" x="628" y="249" width="16" height="16"/><use href="#t" x="654" y="256"/><use href="#fc" x="664.500" y="248" width="16" height="17"/><use href="#t" x="690" y="256"/>
<use href="#al" x="712" y="249" width="15" height="16"/><use href="#ac" x="738" y="249" width="15" height="16"/><use href="#ar" x="763" y="249" width="15" height="16"/><use href="#aj" x="788" y="249" width="15" height="16"/><use href="#wrap" x="823.500" y="249" width="15" height="16"/>
<rect x="855.500" y="218.500" width="145.500" height="23" fill="#fff" stroke="#8a8a8a"/><use href="#cb" x="984" y="218.500"/><text x="857" y="235" textLength="39" lengthAdjust="spacingAndGlyphs">General</text>
<use href="#cur" x="858" y="249" width="16" height="17"/><use href="#t" x="884" y="256"/><text x="897" y="264" style="font-size:17px;fill:#555" textLength="12.500" lengthAdjust="spacingAndGlyphs">%</text><text x="919.500" y="264" style="font-size:17px;fill:#555" textLength="17" lengthAdjust="spacingAndGlyphs">0,0</text>
<text x="956.500" y="264" style="font-size:17px;fill:#555" textLength="14" lengthAdjust="spacingAndGlyphs">.04</text><path d="M964 262h8M968 258v8" stroke="#4c86bd" stroke-width="2"/>
<text x="981" y="264" style="font-size:17px;fill:#555" textLength="14" lengthAdjust="spacingAndGlyphs">.02</text><path d="M989 258l8 8M997 258l-8 8" stroke="#d0506c" stroke-width="1.800"/>
<use href="#mi" x="1050" y="222" width="21" height="20"/><text x="1016" y="263" style="fill:#8b8b8b" textLength="87" lengthAdjust="spacingAndGlyphs">Combinar celdas</text>
<use href="#cu" x="1115" y="222" width="16" height="16"/><use href="#cd" x="1140" y="222" width="16" height="16"/><use href="#cx" x="1165" y="222" width="16" height="16"/>
<use href="#cl" x="1115" y="250" width="16" height="16"/><use href="#cr" x="1140" y="250" width="16" height="16"/><use href="#cxd" x="1165" y="250" width="16" height="16"/>
<use href="#AA" x="1201" y="221" width="16" height="17"/>
<rect x="1222.500" y="218.500" width="145.500" height="23" fill="#fff" stroke="#a6a6a6"/><use href="#cb" x="1351" y="218.500"/><text x="1225" y="235" textLength="83" lengthAdjust="spacingAndGlyphs">Predeterminado</text>
<text x="1202" y="265" class="big" style="font-size:21px" textLength="13.500" lengthAdjust="spacingAndGlyphs">A</text>
<text x="1236.500" y="264" class="h" style="font-size:20px" textLength="12" lengthAdjust="spacingAndGlyphs">H</text><text x="1248" y="265" class="s">1</text>
<text x="1261.500" y="264" class="h" style="font-size:20px" textLength="12" lengthAdjust="spacingAndGlyphs">H</text><text x="1272.500" y="265" class="s" style="fill:#4f86b8">2</text>
<text x="1298" y="263.500" style="font-size:18px;fill:#5c8d8f" textLength="14.500" lengthAdjust="spacingAndGlyphs">+1</text><text x="1323" y="263.500" style="font-size:18px;fill:#7a9a8a" textLength="15.500" lengthAdjust="spacingAndGlyphs">±0</text><text x="1348.500" y="263.500" style="font-size:18px;fill:#9a6a78" textLength="15.500" lengthAdjust="spacingAndGlyphs">-2</text>
<path d="M1470.500 238.500v9l5-4.500z" fill="#111"/>
<text x="1518.500" y="235" textLength="29.500" lengthAdjust="spacingAndGlyphs"><tspan class="u">I</tspan>nicio</text><use href="#T" x="1566" y="229.500"/>
<g opacity=".75"><use href="#srch" x="1508" y="250" width="18" height="18"/><text x="1532" y="257" style="font-size:10px;fill:#777">a</text><text x="1532" y="267" style="font-size:10px;fill:#777">z</text><use href="#sort" x="1536" y="251" width="15" height="16"/><use href="#flt" x="1559" y="251" width="17" height="17"/></g>
<rect x="203" y="276" width="1378" height="29" fill="#f0f0f0"/>
<rect x="203.500" y="278.500" width="124" height="22" fill="#fff" stroke="#b0b0b0"/><use href="#cb" x="310.500" y="278.500"/><text x="207" y="295" textLength="13" lengthAdjust="spacingAndGlyphs">A1</text>
<path class="sep" d="M332.500 281v17M416.500 281v17"/>
<text x="341" y="297" style="font:italic bold 21px 'Liberation Serif',serif;fill:#4f86bd" textLength="15.500" lengthAdjust="spacingAndGlyphs">fx</text>
<text x="369" y="297" style="font-size:20px;fill:#666" textLength="10.500" lengthAdjust="spacingAndGlyphs">∑</text><path d="M393 287h12M393 293.500h12" stroke="#666" stroke-width="2"/>
<rect x="420.500" y="278.500" width="1126" height="23" fill="#fff" stroke="#b4b4b4"/>
<rect x="1552.500" y="279.500" width="14" height="20.500" fill="#dedede" stroke="#555"/><path d="M1555 286.500h9l-4.500 5z" fill="#111"/>
<rect x="203" y="305" width="1378" height="546" fill="#fff"/>
<rect x="203" y="305" width="1378" height="18.500" fill="#efefef"/>
<rect x="235" y="305" width="83" height="18.500" fill="url(#colA)"/>
<text x="276.500" y="320" class="n b" style="fill:#fff">A</text><text x="359.500" y="320" class="n">B</text>
<path d="M203 323.500h186" stroke="#888"/>
<rect x="203" y="324" width="32" height="493" fill="#efefef"/>
<rect x="203" y="324" width="32" height="17" fill="#2c8ce0"/>
<path d="M203 340.500h186m-186 17h186m-186 17h186m-186 17h186m-186 17h186m-186 17h186m-186 17h186m-186 17h186m-186 17h186m-186 17h186m-186 17h186m-186 17h186m-186 17h186m-186 17h186m-186 17h186m-186 17h186m-186 17h186m-186 17h186m-186 17h186m-186 17h186m-186 17h186m-186 17h186m-186 17h186m-186 17h186m-186 17h186m-186 17h186m-186 17h186m-186 17h186m-186 17h186" stroke="#bfbfbf"/>
<path d="M203 340.500h32m-32 17h32m-32 17h32m-32 17h32m-32 17h32m-32 17h32m-32 17h32m-32 17h32m-32 17h32m-32 17h32m-32 17h32m-32 17h32m-32 17h32m-32 17h32m-32 17h32m-32 17h32m-32 17h32m-32 17h32m-32 17h32m-32 17h32m-32 17h32m-32 17h32m-32 17h32m-32 17h32m-32 17h32m-32 17h32m-32 17h32m-32 17h32m-32 17h32" stroke="#8a8a8a"/>
<path d="M235.500 305v512" stroke="#7a7a7a"/><path d="M317.500 305v512" stroke="#b9b9b9"/>
<rect x="235.500" y="324.500" width="82" height="16" fill="#fff" stroke="#000" stroke-width="2"/><rect x="315.500" y="338.500" width="4.500" height="4.500" fill="#000"/>
<g class="n"><text x="219" y="337" class="n b" style="fill:#fff">1</text><text x="219" y="354" class="n">2</text><text x="219" y="371" class="n">3</text><text x="219" y="388" class="n">4</text><text x="219" y="405" class="n">5</text><text x="219" y="422" class="n">6</text><text x="219" y="439" class="n">7</text><text x="219" y="456" class="n">8</text><text x="219" y="473" class="n">9</text><text x="219" y="490" class="n">10</text><text x="219" y="507" class="n">11</text><text x="219" y="524" class="n">12</text><text x="219" y="541" class="n">13</text><text x="219" y="558" class="n">14</text><text x="219" y="575" class="n">15</text><text x="219" y="592" class="n">16</text><text x="219" y="609" class="n">17</text><text x="219" y="626" class="n">18</text><text x="219" y="643" class="n">19</text><text x="219" y="660" class="n">20</text><text x="219" y="677" class="n">21</text><text x="219" y="694" class="n">22</text><text x="219" y="711" class="n">23</text><text x="219" y="728" class="n">24</text><text x="219" y="745" class="n">25</text><text x="219" y="762" class="n">26</text><text x="219" y="779" class="n">27</text><text x="219" y="796" class="n">28</text><text x="219" y="813" class="n">29</text></g>
<rect x="203" y="817" width="186" height="16" fill="#f0f0f0"/><rect x="219" y="818" width="170" height="15" fill="#c8c8c8"/><path d="M213 822l-3.500 3.500 3.500 3.500" fill="none" stroke="#333" stroke-width="1.400"/>
<rect x="203" y="833" width="186" height="18" fill="#f0f0f0"/>
<path d="M216 837v9M222 837.500v8l-5-4zM237 837.500v8l-5-4zM249.500 837.500v8l5-4zM265 837.500v8l5-4zM271 837v9" fill="#aaa" stroke="#aaa"/>
<path d="M291.500 837v10M286.500 842h10" stroke="#111" stroke-width="3"/>
<rect x="306.500" y="833" width="56" height="18" fill="#fff" stroke="#888"/>
<text x="318" y="846.500" class="b" textLength="31" lengthAdjust="spacingAndGlyphs" style="fill:#000">Hoja1</text>
<path d="M203 851.500h186" stroke="#aaa"/>
<rect x="203" y="852" width="186" height="20.500" fill="#f0f0f0"/>
<text x="214" y="867.500" textLength="58" lengthAdjust="spacingAndGlyphs">Hoja 1 de 1</text>
</g>

<!-- WRITER -->
<g>
<rect x="388.500" y="305.500" width="1380" height="600" fill="#dedede" stroke="#033a75" stroke-width="1.500" filter="url(#sh)"/>
<rect x="388" y="305" width="1381" height="31" fill="#02356f"/>
<path d="M399.500 312h8l3.500 3.500V327h-11.500z" fill="#fff"/><path d="M407 312l4 3.500h-4z" fill="#5aa0d0"/><path d="M401.500 318h7.500M401.500 320.500h7.500M401.500 323h7.500" stroke="#2a6ba5"/>
<text x="418" y="325" style="fill:#e6edf4" textLength="160" lengthAdjust="spacingAndGlyphs">Sin título 1 - LibreOffice Writer</text>
<path d="M1649 321h10.500" stroke="#fff"/><rect x="1694.500" y="316" width="9" height="9" fill="none" stroke="#fff" stroke-width="1.200"/><path d="M1740 316l10 10M1750 316l-10 10" stroke="#fff" stroke-width="1.100"/>
<rect x="390" y="336" width="1378" height="30" fill="#f0f0f0"/>
<use href="#qnew" x="393" y="342" width="15.500" height="15.500"/><use href="#qopen" x="418" y="343" width="16" height="16"/><use href="#qsave" x="443" y="342" width="16" height="16"/><use href="#qundo" x="467.500" y="342" width="16" height="16"/><use href="#t" x="493" y="348"/><use href="#qredo" x="503" y="342" width="16" height="16"/><use href="#t" x="529" y="348"/><use href="#qprint" x="540" y="341" width="16" height="16"/>
<path d="M565 338.500H1363.500V366" fill="none" stroke="#dcdcdc"/>
<path d="M766 338v28M863.500 338v28M963.500 338v28M1063 338v28M1163.500 338v28M1263.500 338v28" stroke="#dcdcdc"/>
<rect x="390" y="366" width="1376" height="63" fill="#fff" stroke="#d8d8d8"/>
<rect x="662.500" y="337" width="103.500" height="30" fill="#fff"/>
<text x="604" y="357" textLength="18" lengthAdjust="spacingAndGlyphs"><tspan class="u">F</tspan>ile</text>
<text x="696" y="356" textLength="32" lengthAdjust="spacingAndGlyphs"><tspan class="u">H</tspan>ome</text>
<text x="798" y="357" textLength="29" lengthAdjust="spacingAndGlyphs"><tspan class="u">I</tspan>nsert</text>
<text x="895" y="357" textLength="36" lengthAdjust="spacingAndGlyphs"><tspan class="u">L</tspan>ayout</text>
<text x="984" y="357" textLength="57" lengthAdjust="spacingAndGlyphs">Reference<tspan class="u">s</tspan></text>
<text x="1094" y="357" textLength="37" lengthAdjust="spacingAndGlyphs"><tspan class="u">R</tspan>eview</text>
<text x="1200" y="357" textLength="25" lengthAdjust="spacingAndGlyphs"><tspan class="u">V</tspan>iew</text>
<text x="1299" y="357" textLength="27" lengthAdjust="spacingAndGlyphs"><tspan class="u">T</tspan>ools</text>
<rect x="1740.500" y="337.500" width="25" height="25" fill="#dedede" stroke="#a4a4a4"/><rect x="1742.500" y="339.500" width="21" height="21" fill="none" stroke="#333" stroke-dasharray="1 1"/><path d="M1745 345h16M1745 350h16M1745 355h16" stroke="#444" stroke-width="2"/>
<use href="#paste" x="414" y="376" width="22" height="21"/><use href="#t" x="441.500" y="396"/><text x="406" y="416.500" textLength="29" lengthAdjust="spacingAndGlyphs">Pegar</text>
<use href="#sciss" x="452" y="375" width="15" height="16"/><text x="470.500" y="388.500" textLength="32" lengthAdjust="spacingAndGlyphs">Cortar</text>
<use href="#copy" x="452" y="402" width="15" height="16"/><text x="470.500" y="415.500" textLength="34" lengthAdjust="spacingAndGlyphs">Copiar</text>
<path class="sep" d="M517.500 376v43M846.500 376v43M763.500 403v16M958.500 403v16M965.500 376v16M1051.500 376v43M1087.500 403v16M1198.500 403v16M1259.500 376v43M1356.500 376v43M1687.500 375v46"/>
<use href="#clone" x="527" y="375" width="15" height="16"/><text x="545.500" y="388.500" textLength="34" lengthAdjust="spacingAndGlyphs">Clonar</text>
<use href="#clear" x="526" y="402" width="17" height="17"/><text x="545.500" y="415.500" textLength="39" lengthAdjust="spacingAndGlyphs">Limpiar</text>
<rect x="592.500" y="371.500" width="147" height="23" fill="#fff" stroke="#a6a6a6"/><use href="#cb" x="723" y="371.500"/><text x="595.500" y="388.500" textLength="79" lengthAdjust="spacingAndGlyphs">Liberation Serif</text>
<rect x="745.500" y="371.500" width="45" height="23" fill="#fff" stroke="#a6a6a6"/><use href="#cb" x="772.500" y="371.500"/><text x="749.500" y="388.500" textLength="12.500" lengthAdjust="spacingAndGlyphs">12</text>
<use href="#grow" x="796" y="374" width="15" height="18"/><use href="#shrink" x="821" y="374" width="15" height="18"/>
<use href="#bul" x="856" y="375" width="15" height="16"/><use href="#t" x="881.500" y="382"/><use href="#num" x="891" y="375" width="15" height="16"/><use href="#t" x="917.500" y="382"/><use href="#num" x="928" y="375" width="15" height="16"/><use href="#t" x="953.500" y="382"/>
<use href="#ind" x="975" y="375" width="15" height="16"/><use href="#out" x="1001" y="375" width="15" height="16"/>
<text x="1026" y="391" style="font-size:21px;font-weight:bold;fill:#4c7ba6" textLength="14" lengthAdjust="spacingAndGlyphs">¶</text>
<use href="#AA" x="1062" y="375" width="16" height="17"/>
<rect x="1082.500" y="371.500" width="121" height="23" fill="#fff" stroke="#a6a6a6"/><text x="1085" y="388.500" textLength="100.500" lengthAdjust="spacingAndGlyphs">Estilo predetermina</text><use href="#cb" x="1186" y="371.500"/>
<use href="#upd" x="1208" y="375" width="17" height="17"/><use href="#Asty" x="1234" y="375" width="16" height="17"/>
<use href="#tabl" x="1268" y="375" width="16" height="16"/><text x="1287.500" y="388" textLength="27" lengthAdjust="spacingAndGlyphs">Tabla</text><use href="#t" x="1326.500" y="382"/>
<use href="#esc" x="1364" y="374" width="17" height="17"/><text x="1384" y="388" textLength="32" lengthAdjust="spacingAndGlyphs">Escala</text>
<text x="1705" y="389" textLength="29" lengthAdjust="spacingAndGlyphs"><tspan class="u">I</tspan>nicio</text><use href="#T" x="1751.500" y="383.500"/>
<use href="#srch" x="1698" y="404" width="17" height="17"/><text x="1721" y="417" textLength="34" lengthAdjust="spacingAndGlyphs">Buscar</text>
<text x="596" y="418" class="big bold" textLength="16" lengthAdjust="spacingAndGlyphs">N</text><text x="621" y="418" class="big" textLength="14" lengthAdjust="spacingAndGlyphs">C</text><text x="647.500" y="416" class="big" style="font-size:19px" textLength="12.500" lengthAdjust="spacingAndGlyphs">S</text><path d="M647 418.500h13.500" stroke="#666"/><use href="#t" x="671.500" y="410"/>
<text x="683" y="417" class="big" style="font-size:19px" textLength="13" lengthAdjust="spacingAndGlyphs">S</text><path d="M682.500 410h14" stroke="#555"/>
<text x="712" y="417" class="big" style="font-size:19px" textLength="12" lengthAdjust="spacingAndGlyphs">X</text><text x="723" y="420" class="s">2</text>
<text x="737" y="417" class="big" style="font-size:19px" textLength="12" lengthAdjust="spacingAndGlyphs">X</text><text x="748" y="409" class="s">2</text>
<use href="#hl" x="772" y="402" width="16" height="16"/><use href="#t" x="798.500" y="410"/><use href="#fc" x="808" y="402" width="16" height="17"/><use href="#t" x="834.500" y="410"/>
<rect x="852.500" y="397.500" width="24.500" height="25" fill="#c6e2f6" stroke="#a0cbe8"/>
<use href="#al" x="857" y="403" width="14.500" height="16"/><use href="#ac" x="882" y="403" width="15" height="16"/><use href="#ar" x="906.500" y="403" width="14.500" height="16"/><use href="#aj" x="931.500" y="403" width="14.500" height="16"/>
<use href="#lsp" x="966" y="402" width="15" height="16"/><use href="#t" x="991.500" y="410"/><use href="#bgc" x="1002" y="402" width="16.500" height="16.500"/><use href="#t" x="1028.500" y="410"/>
<text x="1062" y="419" class="big" textLength="14.500" lengthAdjust="spacingAndGlyphs">A</text>
<text x="1096.500" y="418" class="h" style="font-size:20px" textLength="12" lengthAdjust="spacingAndGlyphs">H</text><text x="1107.500" y="419" class="s">1</text>
<text x="1121.500" y="418" class="h" style="font-size:20px" textLength="12" lengthAdjust="spacingAndGlyphs">H</text><text x="1132.500" y="419" class="s">2</text>
<text x="1146.500" y="418" class="h" style="font-size:20px" textLength="12" lengthAdjust="spacingAndGlyphs">H</text><text x="1157" y="419" class="s">3</text>
<text x="1171.500" y="418" class="h" style="font-size:20px" textLength="12" lengthAdjust="spacingAndGlyphs">H</text><text x="1182" y="419" class="s">4</text>
<text x="1210" y="418" style="font-size:20px;font-style:italic;fill:#666" textLength="11.500" lengthAdjust="spacingAndGlyphs">E</text><text x="1235" y="418" style="font-size:20px;font-weight:bold;fill:#666" textLength="12" lengthAdjust="spacingAndGlyphs">S</text>
<use href="#img" x="1269" y="402" width="16.500" height="16"/><use href="#brk" x="1294" y="402" width="17" height="16"/><text x="1317.500" y="418.500" style="font-size:21px;font-weight:bold;fill:#3f7ab0" textLength="17.500" lengthAdjust="spacingAndGlyphs">Ω</text><use href="#t" x="1344" y="409"/>
<use href="#cmt" x="1365" y="402" width="17.500" height="17.500"/><use href="#prv" x="1392" y="403" width="15" height="16"/><use href="#nav" x="1415.500" y="402" width="16.500" height="16.500"/>
<rect x="390" y="430" width="1362" height="461" fill="#dedede"/>
<path d="M397.500 441v4h6.500" fill="none" stroke="#444" stroke-width="2"/>
<rect x="673.500" y="435.500" width="793" height="15" fill="#e9e9e9" stroke="#a8a8a8"/>
<rect x="748.500" y="435" width="643.500" height="16" fill="#fff"/>
<path d="M745.500 435.500h10l-4 7.500 4 7.500h-10l4-7.500z" fill="#dedede" stroke="#555"/>
<path d="M1387.500 450.500h11L1393 441z" fill="#e6e6e6" stroke="#555"/>
<text x="711.500" y="446" class="r">1</text><text x="787" y="446" class="r">1</text><text x="824.500" y="446" class="r">2</text><text x="862" y="446" class="r">3</text><text x="899.500" y="446" class="r">4</text><text x="937" y="446" class="r">5</text><text x="975" y="446" class="r">6</text><text x="1014" y="446" class="r">7</text><text x="1050.500" y="446" class="r">8</text><text x="1088.500" y="446" class="r">9</text><text x="1127" y="446" class="r">10</text><text x="1165" y="446" class="r">11</text><text x="1202" y="446" class="r">12</text><text x="1239" y="446" class="r">13</text><text x="1277.500" y="446" class="r">14</text><text x="1315.500" y="446" class="r">15</text><text x="1353.500" y="446" class="r">16</text><text x="1392" y="446" class="r">17</text><text x="1429.500" y="446" class="r">18</text>
<path d="M692.500 441v2M730.500 441v2M767.500 441v2M805.500 441v2M843.500 441v2M880.500 441v2M918.500 441v2M956.500 441v2M994.500 441v2M1032.500 441v2M1069.500 441v2M1107.500 441v2M1145.500 441v2M1183.500 441v2M1220.500 441v2M1258.500 441v2M1296.500 441v2M1334.500 441v2M1372.500 441v2M1410.500 441v2M1448.500 441v2" stroke="#777"/>
<path d="M787.500 447v3M796 449v2M824.500 448v2M844 449v2M862 448v2M891 449v2M899 447v3M937 447v3M975 448v2M1014 447v2M1023 449v2M1051 447v2M1088 448v2M1097 449v2M1127 447v3M1165 448v2M1174 449v2M1212 449v2M1242 449v2M1277 449v2M1287 449v2M1315 447v3M1353 448v2M1363 449v2" stroke="#444"/>
<rect x="672.500" y="473.500" width="795" height="420" fill="#fff" stroke="#b4b4b4"/>
<path d="M735 551h13.500v-13" fill="none" stroke="#b4b4b4" stroke-width="1.400"/>
<path d="M1391.500 538v13h13.500" fill="none" stroke="#b4b4b4" stroke-width="1.400"/>
<rect x="1752" y="430" width="15.500" height="461" fill="#f0f0f0"/>
<rect x="1752" y="448" width="15.500" height="255" fill="#cdcdcd"/>
<path d="M1755.500 441l4-4 4 4" fill="none" stroke="#444" stroke-width="1.300"/>
<path d="M388.500 305v586M1768.500 305v586" stroke="#033a75" stroke-width="1.200"/>
</g>
</svg>
</body></html>
